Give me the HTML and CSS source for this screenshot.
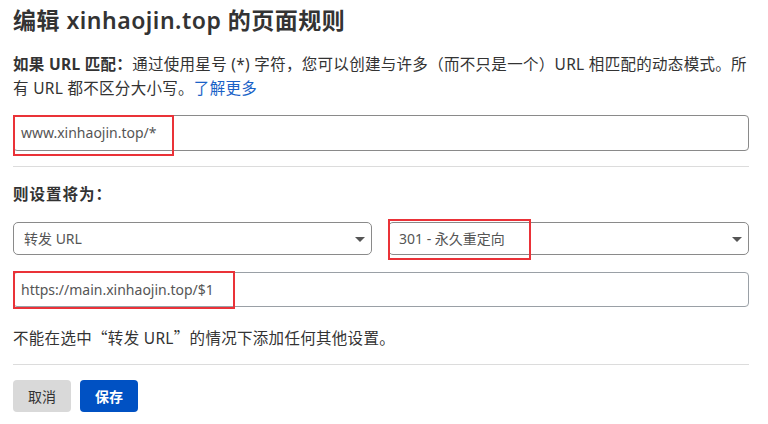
FILE: index.html
```html
<!DOCTYPE html>
<html lang="zh-CN">
<head>
<meta charset="utf-8">
<link rel="stylesheet" href="styles.css">
</head>
<body>
<div class="page">
  <h1 class="title">编辑 xinhaojin.top 的页面规则</h1>
  <p class="desc"><strong>如果 URL 匹配：</strong>通过使用星号 (*) 字符，您可以创建与许多（而不只是一个）URL 相匹配的动态模式。所有 URL 都不区分大小写。<a class="link" href="#">了解更多</a></p>
  <div class="field">
    <div class="input">www.xinhaojin.top/*</div>
    <span class="mark mark-url"></span>
  </div>
  <hr class="divider">
  <div class="label">则设置将为：</div>
  <div class="selects">
    <div class="select">转发 URL<span class="caret"></span></div>
    <div class="field">
      <div class="select">301 - 永久重定向<span class="caret"></span></div>
      <span class="mark mark-code"></span>
    </div>
  </div>
  <div class="field">
    <div class="input">https://main.xinhaojin.top/$1</div>
    <span class="mark mark-dest"></span>
  </div>
  <p class="note">不能在选中<span class="cjk">“</span>转发 URL<span class="cjk">”</span>的情况下添加任何其他设置。</p>
  <hr class="divider divider-bottom">
  <div class="actions">
    <button class="btn btn-cancel">取消</button>
    <button class="btn btn-save">保存</button>
  </div>
</div>
</body>
</html>
```
FILE: styles.css
```css
* { box-sizing: border-box; }
html, body { margin: 0; padding: 0; background: #fff; }
body {
  font-family: "Noto Sans", "Noto Sans CJK SC", sans-serif;
  color: #333;
  text-spacing-trim: space-all;
}
.cjk { font-family: "Noto Sans CJK SC", sans-serif; }
.page {
  width: 736px;
  margin-left: 13px;
  padding-top: 4px;
}
.title {
  margin: 0;
  font-size: 23px;
  font-weight: 600;
  line-height: 32px;
  letter-spacing: 0.5px;
  color: #333;
}
.desc {
  margin: 16px 0 0;
  font-size: 15.5px;
  line-height: 24px;
  letter-spacing: 0.3px;
  color: #333;
}
.desc strong { font-weight: 700; }
.link { color: #1a62c7; text-decoration: none; }
.field { position: relative; }
.input {
  margin-top: 15px;
  height: 36px;
  border: 1px solid #8a8a8a;
  border-radius: 4px;
  padding: 0 7px;
  font-size: 14px;
  line-height: 34px;
  color: #555;
}
.mark {
  position: absolute;
  border: 2px solid #ea3238;
  pointer-events: none;
}
.mark-url { left: 0; top: 0; width: 161px; height: 41px; }
.mark-dest { left: 0; top: -1px; width: 222px; height: 38px; }
.mark-code { left: 0; top: -3px; width: 143px; height: 41px; }
.divider {
  border: 0;
  border-top: 1px solid #dcdcdc;
  margin: 15px 0 0;
}
.label {
  margin-top: 16px;
  font-size: 15.5px;
  font-weight: 700;
  line-height: 22px;
  letter-spacing: 1px;
}
.selects {
  display: grid;
  grid-template-columns: 359px 1fr;
  column-gap: 16px;
  margin-top: 17px;
}
.select {
  position: relative;
  height: 33px;
  border: 1px solid #8a8a8a;
  border-radius: 5px;
  padding: 0 10px;
  font-size: 14px;
  line-height: 31px;
  color: #555;
}
.caret {
  position: absolute;
  right: 6px;
  top: 14px;
  width: 0;
  height: 0;
  border-left: 5px solid transparent;
  border-right: 5px solid transparent;
  border-top: 5px solid #555;
}
.selects + .field .input { margin-top: 17px; height: 35px; border-color: #9aa0a6; }
.note {
  margin: 18px 0 0;
  font-size: 15.5px;
  line-height: 24px;
  letter-spacing: 0.3px;
  color: #333;
}
.divider-bottom { margin-top: 14px; }
.actions {
  display: flex;
  gap: 9px;
  margin-top: 15px;
}
.btn {
  width: 58px;
  height: 32px;
  border: 0;
  border-radius: 4px;
  font-family: inherit;
  font-size: 14px;
  padding: 0;
}
.btn-cancel { background: #d9d9d9; color: #333; }
.btn-save { background: #0051c3; color: #fff; font-weight: 700; }
```
